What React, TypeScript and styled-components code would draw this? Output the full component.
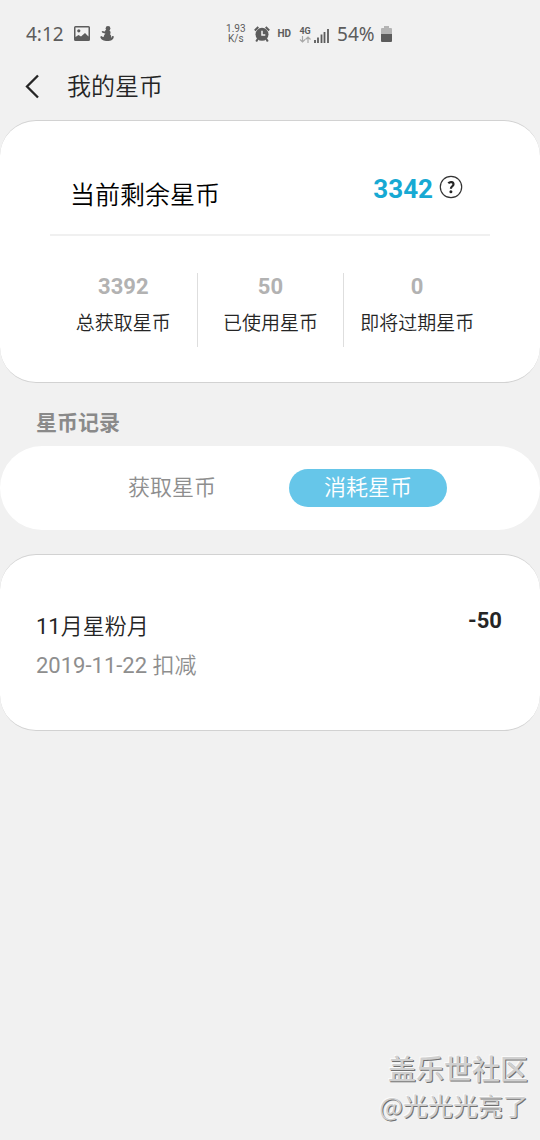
import React from "react";
import styled, { createGlobalStyle } from "styled-components";

const GlobalStyle = createGlobalStyle`
  *, *::before, *::after { box-sizing: border-box; }
  body {
    margin: 0;
    background: #f1f1f1;
    color: #252525;
    font-family: Roboto, "Noto Sans CJK SC DemiLight", "Noto Sans CJK SC", sans-serif;
  }
  button { font: inherit; color: inherit; background: none; border: 0; padding: 0; cursor: pointer; }
  h1, h2, p, ul, dl, dd { margin: 0; padding: 0; font-weight: 400; }
`;

const Page = styled.div`
  min-height: 100vh;
  display: flex;
  flex-direction: column;
`;

const StatusBar = styled.div`
  display: flex;
  align-items: center;
  height: 52px;
  padding: 16px 36px 0 26px;
  color: #5c5c5c;
  font-family: "Noto Sans", sans-serif;
  white-space: nowrap;
  svg { display: block; flex: none; }
`;

const StatusGroup = styled.div<{ $end?: boolean }>`
  display: flex;
  align-items: center;
  gap: ${(p) => (p.$end ? 8 : 10)}px;
  ${(p) => (p.$end ? "margin: 0 auto;" : "")}
`;

const StatusText = styled.span`
  font-size: 19px;
  line-height: 24px;
`;

const Battery = styled.span`
  display: flex;
  align-items: center;
  gap: 6px;
`;

const Speed = styled.span`
  display: flex;
  flex-direction: column;
  align-items: center;
  font-family: Roboto, sans-serif;
  font-size: 10px;
  line-height: 10px;
`;

const Hd = styled.span`
  font-family: Roboto, sans-serif;
  font-size: 10px;
  font-weight: 700;
  line-height: 12px;
`;

const Network = styled.span`
  display: flex;
  align-items: flex-end;
  gap: 3px;
`;

const NetworkType = styled.span`
  display: flex;
  flex-direction: column;
  align-items: center;
  font-family: Roboto, sans-serif;
  font-size: 9px;
  font-weight: 700;
  line-height: 10px;
`;

const TitleBar = styled.header`
  display: flex;
  align-items: center;
  gap: 26px;
  height: 68px;
  padding: 0 24px;
`;

const BackButton = styled.button`
  display: flex;
  width: 17px;
  height: 26px;
  align-items: center;
`;

const Title = styled.h1`
  padding-top: 2px;
  font-size: 24px;
  font-weight: 350;
  line-height: 36px;
`;

const Card = styled.section<{ $plain?: boolean }>`
  background: #fff;
  border: solid ${(p) => (p.$plain ? "transparent" : "#d2d2d2")};
  border-width: ${(p) => (p.$plain ? "0" : "1px 0")};
  border-radius: ${(p) => (p.$plain ? 42 : 36)}px;
`;

const Summary = styled(Card)`
  padding: 48px 50px 35px;
`;

const BalanceRow = styled.div`
  display: flex;
  justify-content: space-between;
  align-items: flex-start;
  height: 67px;
  padding: 0 27px 0 20px;
  border-bottom: 2px solid #f0f0f0;
`;

const BalanceLabel = styled.h2`
  padding-top: 8px;
  font-size: 25px;
  font-weight: 350;
  line-height: 38px;
  color: #000;
`;

const Balance = styled.div`
  display: flex;
  align-items: center;
  gap: 6px;
  padding-top: 1px;
  line-height: 38px;
`;

const BalanceValue = styled.strong`
  font-size: 26px;
  font-weight: 700;
  color: #17a9d3;
`;

const HelpButton = styled.button`
  display: block;
  width: 24px;
  height: 24px;
  margin-bottom: 4px;
  svg { display: block; }
`;

const Stats = styled.dl`
  display: grid;
  grid-template-columns: repeat(3, 1fr);
  margin-top: 37px;
`;

const Stat = styled.div`
  display: flex;
  flex-direction: column-reverse;
  justify-content: flex-end;
  align-items: center;
  height: 74px;
  white-space: nowrap;
  & + & { border-left: 1px solid #dedede; }
`;

const StatLabel = styled.dt`
  padding-top: 9px;
  font-size: 19px;
  font-weight: 350;
  line-height: 28px;
`;

const StatValue = styled.dd`
  && { font-weight: 700; }
  font-size: 22px;
  line-height: 28px;
  color: #b2b2b2;
`;

const SectionTitle = styled.h2`
  padding: 22px 36px 9px;
  font-family: "Noto Sans CJK SC", sans-serif;
  font-size: 21px;
  font-weight: 700;
  line-height: 32px;
  color: #8a8a8a;
`;

const Tabs = styled(Card)`
  display: flex;
  justify-content: center;
  align-items: center;
  gap: 38px;
  height: 84px;
`;

const Tab = styled.button<{ $active?: boolean }>`
  width: 158px;
  height: 38px;
  border-radius: 19px;
  font-size: 22px;
  font-weight: 350;
  line-height: 38px;
  color: ${(p) => (p.$active ? "#fff" : "#8e8e8e")};
  background: ${(p) => (p.$active ? "#66c6e9" : "transparent")};
`;

const Records = styled(Card)`
  margin-top: 24px;
  padding: 50px 36px 45px;
`;

const Record = styled.article`
  display: flex;
  justify-content: space-between;
  font-size: 22px;
`;

const RecordName = styled.p`
  padding-top: 2px;
  line-height: 40px;
`;

const RecordDate = styled.p`
  line-height: 38px;
  color: #8e8e8e;
`;

const Amount = styled.strong`
  line-height: 32px;
  padding-right: 2px;
`;

const Watermark = styled.footer`
  margin-top: auto;
  padding: 0 12px 17px;
  text-align: right;
  color: #d0d0d0;
  font-family: "Noto Sans CJK SC", sans-serif;
  text-shadow: 1px 1px 0 #707070, -1px -1px 0 #fafafa;
`;

const Community = styled.p`
  font-size: 28px;
  font-weight: 500;
  line-height: 38px;
`;

const Author = styled.p`
  font-size: 25px;
  line-height: 36px;
`;

const stats = [
  { label: "总获取星币", value: "3392" },
  { label: "已使用星币", value: "50" },
  { label: "即将过期星币", value: "0" },
];

const records = [{ name: "11月星粉月", date: "2019-11-22", kind: "扣减", amount: "-50" }];

const PictureIcon = () => (
  <svg width="16" height="16" viewBox="0 0 16 16" aria-hidden="true">
    <path fill="#5c5c5c" fillRule="evenodd" d="M1.500 0h13A1.500 1.500 0 0 1 16 1.500v12A1.500 1.500 0 0 1 14.500 15h-13A1.500 1.500 0 0 1 0 13.500v-12A1.500 1.500 0 0 1 1.500 0zM1.500 1.500v9.500l3-2 2.500 1.500 4-3.500 3.500 3.500V1.500z" />
    <circle cx="4.800" cy="4.800" r="1.600" fill="#5c5c5c" />
  </svg>
);

const FigureIcon = () => (
  <svg width="14" height="16" viewBox="0 0 14 16" aria-hidden="true">
    <circle cx="8" cy="2.400" r="2.400" fill="#5c5c5c" />
    <path fill="#5c5c5c" d="M5.500 4H9c1.800 1.200 2 3 1 4.300 1.200.9 1.600 2.300 1 3.500.7-.4 1-.9 1.200-1.900l1.600.3c0 3.300-2.800 4.800-6.400 4.800C3.800 15 .8 13.800.2 10.800l1.400-.7c.8.8 1.400 1 2.200.7.100-1.300.7-2.300 1.700-3L2 6.500 1.800 5l3.200.5z" />
  </svg>
);

const AlarmIcon = () => (
  <svg width="16" height="16" viewBox="0 0 16 16" aria-hidden="true">
    <path d="M.8 4.500 4.300 1M15.200 4.500 11.700 1M4 12.500 2.200 15.500M12 12.500l1.800 3" fill="none" stroke="#5c5c5c" strokeWidth="2" />
    <circle cx="8" cy="8.300" r="6.500" fill="#5c5c5c" />
    <path d="M8 4.800V9h3.300" fill="none" stroke="#f1f1f1" strokeWidth="1.500" />
  </svg>
);

const DataArrowsIcon = () => (
  <svg width="12" height="7" viewBox="0 0 12 7" aria-hidden="true">
    <path d="M3.500 0v6M1 3.500l2.500 2.500L6 3.500M9 7V1M6.500 3.500 9 1l2.500 2.500" fill="none" stroke="#a8a8a8" strokeWidth="1.200" />
  </svg>
);

const SignalIcon = () => (
  <svg width="15" height="15" viewBox="0 0 15 15" aria-hidden="true">
    <path d="M1 12v3M4 9.500V15M7.500 6.500V15M10.500 4v11M14 1v14" stroke="#5c5c5c" strokeWidth="1.800" />
  </svg>
);

const BatteryIcon = () => (
  <svg width="11" height="16" viewBox="0 0 11 16" aria-hidden="true">
    <path fill="#b4b4b4" d="M3 0h5v2h2a1 1 0 0 1 1 1v5H0V3a1 1 0 0 1 1-1h2z" />
    <path fill="#5c5c5c" d="M0 8h11v7a1 1 0 0 1-1 1H1a1 1 0 0 1-1-1z" />
  </svg>
);

export default function App() {
  return (
    <Page>
      <GlobalStyle />
      <StatusBar>
        <StatusGroup>
          <StatusText>4:12</StatusText>
          <PictureIcon />
          <FigureIcon />
        </StatusGroup>
        <StatusGroup $end>
          <Speed>
            <span>1.93</span>
            <span>K/s</span>
          </Speed>
          <AlarmIcon />
          <Hd>HD</Hd>
          <Network>
            <NetworkType>
              <span>4G</span>
              <DataArrowsIcon />
            </NetworkType>
            <SignalIcon />
          </Network>
          <Battery>
            <StatusText>54%</StatusText>
            <BatteryIcon />
          </Battery>
        </StatusGroup>
      </StatusBar>
      <TitleBar>
        <BackButton aria-label="返回">
          <svg width="17" height="26" viewBox="0 0 17 26" aria-hidden="true">
            <path d="M14 2.500 3 13.500l11 11" fill="none" stroke="#252525" strokeWidth="2.300" />
          </svg>
        </BackButton>
        <Title>我的星币</Title>
      </TitleBar>
      <main>
        <Summary>
          <BalanceRow>
            <BalanceLabel>当前剩余星币</BalanceLabel>
            <Balance>
              <BalanceValue>3342</BalanceValue>
              <HelpButton aria-label="帮助">
                <svg width="24" height="24" viewBox="0 0 24 24" aria-hidden="true">
                  <circle cx="12" cy="12" r="10.700" fill="none" stroke="#333" strokeWidth="1.200" />
                  <path d="M9.300 8.300C11 6.500 14.500 6.800 14.500 9.300c0 2-2.600 2-2.600 4.500" fill="none" stroke="#252525" strokeWidth="2.200" />
                  <circle cx="11.900" cy="16.800" r="1.500" fill="#252525" />
                </svg>
              </HelpButton>
            </Balance>
          </BalanceRow>
          <Stats>
            {stats.map((s) => (
              <Stat key={s.label}>
                <StatLabel>{s.label}</StatLabel>
                <StatValue>{s.value}</StatValue>
              </Stat>
            ))}
          </Stats>
        </Summary>
        <SectionTitle>星币记录</SectionTitle>
        <Tabs $plain>
          <Tab>获取星币</Tab>
          <Tab $active>消耗星币</Tab>
        </Tabs>
        <Records>
          {records.map((r) => (
            <Record key={r.date}>
              <div>
                <RecordName>{r.name}</RecordName>
                <RecordDate>
                  {r.date} {r.kind}
                </RecordDate>
              </div>
              <Amount>{r.amount}</Amount>
            </Record>
          ))}
        </Records>
      </main>
      <Watermark>
        <Community>盖乐世社区</Community>
        <Author>@光光光亮了</Author>
      </Watermark>
    </Page>
  );
}
